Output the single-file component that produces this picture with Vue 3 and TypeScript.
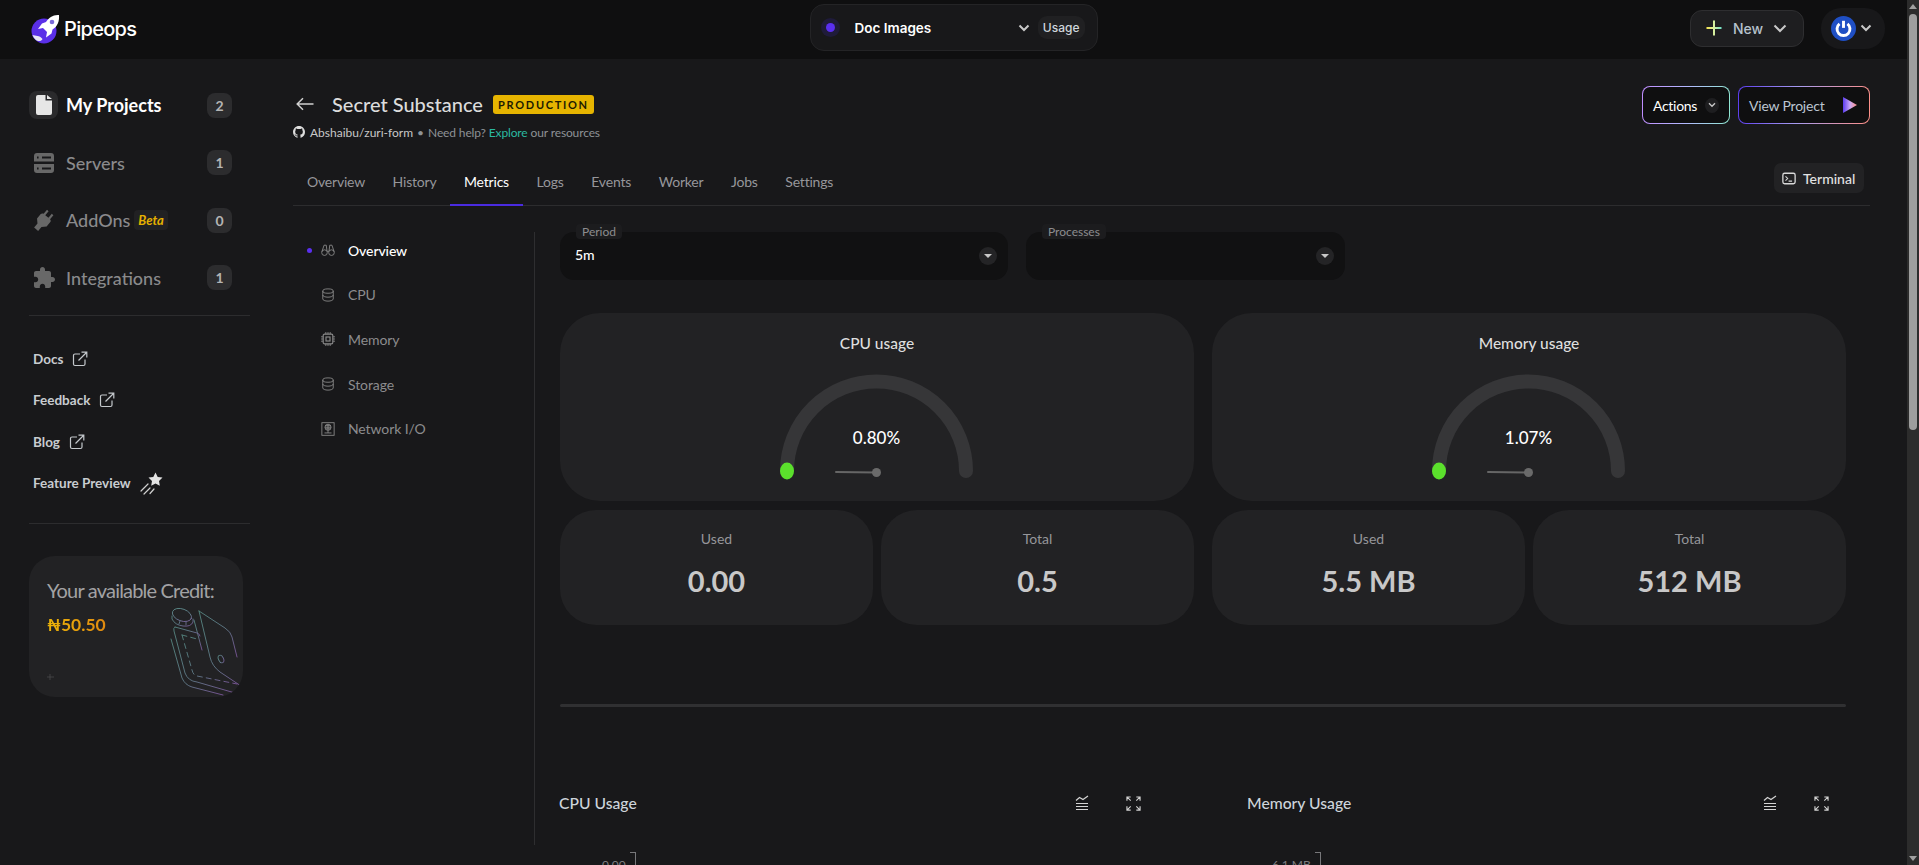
<script setup lang="ts">
interface NavItem { label: string; count: number; icon: string; active?: boolean; beta?: boolean }
const nav: NavItem[] = [
  { label: 'My Projects', count: 2, icon: 'file', active: true },
  { label: 'Servers', count: 1, icon: 'server' },
  { label: 'AddOns', count: 0, icon: 'plug', beta: true },
  { label: 'Integrations', count: 1, icon: 'puzzle' },
]
const links = ['Docs', 'Feedback', 'Blog']
const tabs = ['Overview', 'History', 'Metrics', 'Logs', 'Events', 'Worker', 'Jobs', 'Settings']
const subnav = [
  { label: 'Overview', icon: 'binoculars', active: true },
  { label: 'CPU', icon: 'db' },
  { label: 'Memory', icon: 'chip' },
  { label: 'Storage', icon: 'db' },
  { label: 'Network I/O', icon: 'net' },
]
const gauges = [
  { title: 'CPU usage', value: '0.80%', used: '0.00', total: '0.5' },
  { title: 'Memory usage', value: '1.07%', used: '5.5 MB', total: '512 MB' },
]
const charts = [
  { title: 'CPU Usage', tick: '0.00' },
  { title: 'Memory Usage', tick: '6.1 MB' },
]
</script>

<template>
  <div class="app">
    <div class="page">
      <header class="topbar">
        <div class="brand">
          <svg class="logo" viewBox="0 0 30 30" width="30" height="30">
            <circle cx="13" cy="17" r="12.500" fill="#5a2fe8" />
            <path d="M1.500 21c3 1 7 0 10 4-2 4-8 2-10-4z" fill="#e8e6f5" />
            <path d="M28 1c-6-.5-10 2.500-13 7l-4 1.500-4 5.500 5-1 4 4-1 5.500 5.500-4 1-4c5-3 7-8 6.500-14.500z" fill="#fff" />
            <circle cx="21" cy="8" r="2.300" fill="#7a6ad8" />
          </svg>
          <span class="brand-name">Pipeops</span>
        </div>
        <div class="project-pill">
          <span class="halo"><i></i></span>
          <span class="project-name">Doc Images</span>
          <svg class="chev" viewBox="0 0 12 8" width="12" height="8"><path d="M1.500 1.500 6 6l4.500-4.500" /></svg>
          <span class="usage">Usage</span>
        </div>
        <div class="top-actions">
          <button class="new-btn">
            <svg viewBox="0 0 16 16" width="16" height="16">
              <defs><linearGradient id="plusg" x1="0" x2="1" y1="0" y2="0"><stop offset="0" stop-color="#f4e34e" /><stop offset="0.5" stop-color="#d8efa0" /><stop offset="1" stop-color="#6fe0c8" /></linearGradient></defs>
              <path d="M0.500 7h15v2h-15zM7 .5h2v15H7z" fill="url(#plusg)" />
            </svg>
            <span>New</span>
            <svg class="chev wide" viewBox="0 0 14 9" width="14" height="9"><path d="M1.500 1.500 7 7l5.500-5.500" /></svg>
          </button>
          <div class="avatar-pill">
            <svg viewBox="0 0 24 24" width="25" height="25">
              <circle cx="12" cy="12" r="12" fill="#1f4fc4" />
              <path d="M8.200 7.600a6.200 6.200 0 1 0 7.600 0" fill="none" stroke="#fff" stroke-width="2.800" />
              <path d="M12 4.600v6.800" stroke="#fff" stroke-width="2.800" />
            </svg>
            <svg class="chev" viewBox="0 0 12 8" width="12" height="8"><path d="M1.500 1.500 6 6l4.500-4.500" /></svg>
          </div>
        </div>
      </header>

      <div class="shell">
        <aside class="sidebar">
          <nav class="nav">
            <div v-for="item in nav" :key="item.label" class="nav-row" :class="{ active: item.active }">
              <span class="nav-icon">
                <svg v-if="item.icon === 'file'" viewBox="0 0 16 20" width="16" height="20"><path d="M2 0h7.500v5.500H16V18a2 2 0 0 1-2 2H2a2 2 0 0 1-2-2V2a2 2 0 0 1 2-2z" fill="#e6e6e6" /><path d="M11 0l5 4h-5z" fill="#e6e6e6" /></svg>
                <svg v-else-if="item.icon === 'server'" viewBox="0 0 20 20" width="20" height="20"><path fill-rule="evenodd" d="M3 0h14a3 3 0 0 1 3 3v5.500H0V3a3 3 0 0 1 3-3zm0 3.500v2h1.600v-2zM0 11h20v6a3 3 0 0 1-3 3H3a3 3 0 0 1-3-3zm3 3.500v2h1.600v-2zm5-11v2h9v-2zm0 11v2h9v-2z" fill="#686868" /></svg>
                <svg v-else-if="item.icon === 'plug'" viewBox="0 0 24 24" width="25" height="25"><g transform="rotate(40 12 12)"><path d="M16 7V2h-2v5h-4V2H8v5c-1 0-2 1-2 2v5.500L9.500 18v5h5v-5l3.500-3.500V9c0-1-1-2-2-2z" fill="#686868" /></g></svg>
                <svg v-else viewBox="0 0 24 24" width="24" height="24"><path d="M20.500 11H19V7c0-1.100-.9-2-2-2h-4V3.500C13 2.120 11.880 1 10.500 1S8 2.120 8 3.500V5H4c-1.100 0-1.990.9-1.990 2v3.800H3.500c1.490 0 2.700 1.210 2.700 2.700s-1.210 2.700-2.700 2.700H2V20c0 1.100.9 2 2 2h3.800v-1.500c0-1.490 1.210-2.700 2.700-2.700 1.490 0 2.700 1.210 2.700 2.700V22H17c1.100 0 2-.9 2-2v-4h1.500c1.380 0 2.500-1.120 2.500-2.500S21.880 11 20.500 11z" fill="#686868" /></svg>
              </span>
              <span class="nav-label">{{ item.label }}</span>
              <span v-if="item.beta" class="beta">Beta</span>
              <span class="count">{{ item.count }}</span>
            </div>
          </nav>
          <hr class="rule" />
          <div class="links">
            <a v-for="l in links" :key="l" class="link">
              {{ l }}
              <svg viewBox="0 0 16 16" width="16" height="16" class="ext"><path d="M8 3H3a1.500 1.500 0 0 0-1.500 1.500v8.500A1.500 1.500 0 0 0 3 14.500h8.500A1.500 1.500 0 0 0 13 13V8.500M6.500 9.500 14.500 1.500M9.500 1.200h5.300v5.300" /></svg>
            </a>
            <a class="link preview">
              Feature Preview
              <svg viewBox="0 0 24 24" width="24" height="24">
                <path d="M15.500 1.500l2.200 4.400 4.800.7-3.500 3.300.8 4.800-4.300-2.300-4.300 2.300.8-4.800L8.500 6.600l4.800-.7z" fill="#e3e3e3" />
                <path d="M8 13l-7 7M10 17l-6 6M14 18l-4 4.500" stroke="#d0d0d0" stroke-width="1.200" fill="none" stroke-linecap="round" />
              </svg>
            </a>
          </div>
          <hr class="rule" />
          <div class="credit">
            <p class="credit-title">Your available Credit:</p>
            <p class="credit-value">₦50.50</p>
            <svg class="wallet" viewBox="0 0 214 141" width="214" height="141" fill="none">
              <defs><linearGradient id="wg" x1="0" y1="0" x2="1" y2="1"><stop offset="0" stop-color="#5f9a92" /><stop offset="0.55" stop-color="#6e8a9c" /><stop offset="1" stop-color="#8c5fb0" /></linearGradient></defs>
              <g stroke="url(#wg)" stroke-width="0.900" stroke-linecap="round" stroke-linejoin="round" opacity="0.85">
                <path d="M170 55l26 17q6 4 7 9l5 20" />
                <path d="M170 55l11 46q2 9 10 15l21 14" />
                <path d="M165 64l8 30" />
                <path d="M146 71q-2 1-1 4l11 42q3 8 12 9l38 11" />
                <path d="M146 71l22 6q3 1 3 3" />
                <path d="M142 83l11 39q3 7 10 9l31 8" />
                <path d="M153 79l10 35q1 5 5 6l40 8M153 79l15 4" stroke-dasharray="5 4" />
                <ellipse cx="192" cy="103" rx="2.500" ry="4" transform="rotate(-25 192 103)" />
                <ellipse cx="153" cy="59" rx="10" ry="6" transform="rotate(20 153 59)" />
                <path d="M143 60l0 3q3 6 11 7 8 1 10-4l0-3M150 68l1-3M157 69l0-3" />
              </g>
              <path d="M21 118v6M18 121h7" stroke="#4a4a4c" stroke-width="0.800" />
            </svg>
          </div>
        </aside>

        <main class="main">
          <div class="head">
            <div>
              <div class="title-row">
                <svg viewBox="0 0 18 14" width="18" height="14" class="back"><path d="M17.500 7H1.500M7 1.200 1.200 7 7 12.800" /></svg>
                <h1>Secret Substance</h1>
                <span class="prod">PRODUCTION</span>
              </div>
              <div class="sub-row">
                <svg viewBox="0 0 16 16" width="12" height="12"><path fill="#ddd" d="M8 0C3.580 0 0 3.580 0 8c0 3.540 2.290 6.530 5.470 7.590.4.070.55-.17.55-.38 0-.19-.01-.82-.01-1.490-2.010.37-2.530-.49-2.690-.94-.09-.23-.48-.94-.82-1.130-.28-.15-.68-.52-.01-.53.63-.01 1.080.58 1.230.82.720 1.210 1.870.87 2.330.66.070-.52.280-.87.510-1.070-1.780-.2-3.640-.89-3.640-3.950 0-.87.310-1.590.820-2.150-.08-.2-.36-1.020.080-2.120 0 0 .67-.21 2.200.82.640-.18 1.320-.27 2-.27.68 0 1.360.09 2 .27 1.530-1.040 2.200-.82 2.200-.82.44 1.100.16 1.920.08 2.120.51.56.82 1.270.82 2.150 0 3.070-1.870 3.750-3.650 3.950.29.25.54.73.54 1.480 0 1.070-.01 1.930-.01 2.200 0 .21.150.46.550.38A8.013 8.013 0 0 0 16 8c0-4.420-3.58-8-8-8z" /></svg>
                <span class="repo">Abshaibu/zuri-form</span>
                <span class="bullet">•</span>
                <span class="help">Need help? <b>Explore</b> our resources</span>
              </div>
            </div>
            <div class="head-actions">
              <button class="grad-btn actions">
                Actions
                <span class="mini-chev"><svg class="chev" viewBox="0 0 12 8" width="8" height="6"><path d="M1.500 1.500 6 6l4.500-4.500" /></svg></span>
              </button>
              <button class="grad-btn view">
                View Project
                <svg viewBox="0 0 14 16" width="14" height="16">
                  <defs><linearGradient id="playg" x1="0" x2="1" y1="0" y2="0"><stop offset="0" stop-color="#5b3cf0" /><stop offset="0.5" stop-color="#c9a8f5" /><stop offset="1" stop-color="#ff8f86" /></linearGradient></defs>
                  <path d="M0 0l14 8-14 8z" fill="url(#playg)" />
                </svg>
              </button>
            </div>
          </div>

          <div class="tabs">
            <a v-for="t in tabs" :key="t" class="tab" :class="{ on: t === 'Metrics' }">{{ t }}</a>
            <button class="terminal">
              <svg viewBox="0 0 16 14" width="14" height="13"><rect x="1" y="1" width="14" height="12" rx="2" fill="none" stroke="#d8d8d8" stroke-width="1.500" /><path d="M4 4.500 6.500 7 4 9.500M7.500 10h4" fill="none" stroke="#d8d8d8" stroke-width="1.200" /></svg>
              Terminal
            </button>
          </div>

          <div class="metrics">
            <ul class="subnav">
              <li v-for="s in subnav" :key="s.label" class="sub-item" :class="{ on: s.active }">
                <i class="sub-dot"></i>
                <svg class="sub-icon" viewBox="0 0 16 16" width="14" height="14">
                  <template v-if="s.icon === 'binoculars'">
                    <circle cx="4" cy="11" r="3.200" /><circle cx="12" cy="11" r="3.200" />
                    <path d="M1 10 3.500 2.500h2.500L6.800 9M15 10l-2.500-7.500H10L9.200 9M6.800 9.500h2.400" />
                  </template>
                  <template v-else-if="s.icon === 'db'">
                    <ellipse cx="8" cy="3.500" rx="6" ry="2.500" />
                    <path d="M2 3.500v9c0 1.400 2.700 2.500 6 2.500s6-1.100 6-2.500v-9M2 8c0 1.400 2.700 2.500 6 2.500s6-1.100 6-2.500" />
                  </template>
                  <template v-else-if="s.icon === 'chip'">
                    <rect x="2.500" y="2.500" width="11" height="11" rx="1.500" stroke-width="1.300" />
                    <rect x="5.700" y="5.700" width="4.600" height="4.600" stroke-width="1.300" />
                    <path d="M5.500 0v2.500M8 0v2.500M10.500 0v2.500M5.500 13.500V16M8 13.500V16M10.500 13.500V16M0 5.500h2.500M0 8h2.500M0 10.500h2.500M13.500 5.500H16M13.500 8H16M13.500 10.500H16" />
                  </template>
                  <template v-else>
                    <rect x="1" y="0.800" width="14" height="14.400" />
                    <circle cx="8" cy="6" r="3.500" /><path d="M4.500 6h7M8 2.500v7M5 4.200h6M5 7.800h6M8 9.500v3M4 12.500h8" />
                  </template>
                </svg>
                <span>{{ s.label }}</span>
              </li>
            </ul>

            <section class="panel">
              <div class="selects">
                <div class="select period">
                  <span class="select-label">Period</span>
                  <span class="select-value">5m</span>
                  <span class="caret"><i></i></span>
                </div>
                <div class="select processes">
                  <span class="select-label">Processes</span>
                  <span class="select-value"></span>
                  <span class="caret"><i></i></span>
                </div>
              </div>

              <div class="gauges">
                <div v-for="g in gauges" :key="g.title" class="gauge-col">
                  <div class="gauge-card">
                    <h3>{{ g.title }}</h3>
                    <svg class="gauge" viewBox="0 0 200 115" width="200" height="115">
                      <path d="M11 101A89.500 89.500 0 0 1 190 101" fill="none" stroke="#363638" stroke-width="14" stroke-linecap="round" />
                      <ellipse cx="11" cy="101" rx="7" ry="8.500" fill="#5be02c" />
                      <path d="M60 102 100 102.500" stroke="#666" stroke-width="2" stroke-linecap="round" />
                      <circle cx="100.500" cy="102.500" r="4.500" fill="#6a6a6a" />
                      <text x="100.500" y="74" text-anchor="middle" class="gauge-val">{{ g.value }}</text>
                    </svg>
                  </div>
                  <div class="stats">
                    <div class="stat"><span>Used</span><strong>{{ g.used }}</strong></div>
                    <div class="stat"><span>Total</span><strong>{{ g.total }}</strong></div>
                  </div>
                </div>
              </div>

              <div class="thick-rule"></div>

              <div class="charts">
                <div v-for="c in charts" :key="c.title" class="chart">
                  <div class="chart-head">
                    <h4>{{ c.title }}</h4>
                    <span class="chart-tools">
                      <svg viewBox="0 0 14 16" width="14" height="16" class="tool"><path d="M1 5.500 4.500 2.500 8 4.500 13 1M1 8.500h12M1 11.500h12M1 14.500h12" /></svg>
                      <svg viewBox="0 0 16 16" width="15" height="15" class="tool"><path d="M1 5V1h4M11 1h4v4M15 11v4h-4M5 15H1v-4M1 1l4 4M15 1l-4 4M15 15l-4-4M1 15l4-4" /></svg>
                    </span>
                  </div>
                  <div class="axis"><span>{{ c.tick }}</span><i></i></div>
                </div>
              </div>
            </section>
          </div>
        </main>
      </div>
    </div>
    <div class="scrollbar">
      <i class="arrow up"></i>
      <i class="thumb"></i>
      <i class="arrow down"></i>
    </div>
  </div>
</template>

<style scoped>
.app { display: flex; height: 865px; width: 1919px; overflow: hidden; background: #18181a; font-family: Lato, "Noto Sans", sans-serif; color: #e8e8e8; }
.page { width: 1907px; height: 865px; overflow: hidden; flex: none; }
.scrollbar { width: 12px; height: 865px; background: #2c2c2c; position: relative; display: flex; flex-direction: column; align-items: center; padding: 4px 0; box-sizing: border-box; }
.thumb { display: block; width: 8px; height: 416px; margin-top: 5px; background: #9e9e9e; border-radius: 4px; flex: none; }
.arrow { display: block; width: 0; height: 0; border-left: 4px solid transparent; border-right: 4px solid transparent; flex: none; }
.arrow.up { border-bottom: 5px solid #a0a0a0; }
.arrow.down { border-top: 5px solid #a0a0a0; margin-top: auto; }

.topbar { height: 59px; background: #0f0f10; display: grid; grid-template-columns: 1fr auto 1fr; align-items: center; padding: 0 22px; box-sizing: border-box; }
.brand { display: flex; align-items: center; gap: 3px; padding-left: 9px; margin-bottom: 2px; }
.brand-name { font-family: Inter, sans-serif; font-size: 20px; font-weight: 500; color: #fff; letter-spacing: -0.700px; }
.project-pill { width: 288px; height: 47px; margin-bottom: 4px; box-sizing: border-box; display: flex; align-items: center; padding: 0 12px 0 10px; background: #18181a; border: 1px solid #242426; border-radius: 14px; }
.halo { width: 19px; height: 19px; border-radius: 50%; background: #1f1b3a; display: flex; align-items: center; justify-content: center; }
.halo i { width: 9px; height: 9px; border-radius: 50%; background: #5a2ff0; display: block; }
.project-name { margin-left: 15px; font: 600 13.500px Inter, sans-serif; color: #fff; flex: 1; }
.chev { fill: none; stroke: #c8c8c8; stroke-width: 2; }
.usage { margin-left: 8px; padding: 0 5px; height: 23px; background: #202022; border-radius: 9px; font: 500 12px/23px Inter, sans-serif; color: #cfd6dc; }
.top-actions { justify-self: end; display: flex; align-items: center; gap: 17px; margin-bottom: 3px; }
.new-btn { width: 114px; height: 37px; display: flex; align-items: center; box-sizing: border-box; padding: 0 16px 0 15px; background: #1e1e20; border: 1.500px solid #2e2e30; border-radius: 12px; color: #b6c2cc; font: 500 14px Inter, sans-serif; }
.new-btn span { margin-left: 11px; flex: 1; text-align: left; }
.avatar-pill { width: 64px; height: 41px; background: #18181a; border-radius: 20px; display: flex; align-items: center; gap: 4px; padding-left: 10px; box-sizing: border-box; }

.shell { display: flex; height: 806px; }
.sidebar { width: 293px; flex: none; box-sizing: border-box; padding: 32px 43px 0 29px; }
.nav { display: flex; flex-direction: column; gap: 29.500px; }
.nav-row { height: 28px; display: flex; align-items: center; color: #8a8a8c; font-size: 18px; font-weight: 500; }
.nav-row.active { color: #fff; font-weight: 700; }
.nav-icon { width: 29px; height: 28px; display: flex; align-items: center; justify-content: center; border-radius: 8px; flex: none; margin-right: 8px; }
.active .nav-icon { background: #2a2a2c; }
.nav-label { white-space: nowrap; }
.beta { margin-left: 4px; padding: 0 4px; height: 20px; line-height: 20px; background: #212123; border-radius: 4px; color: #e5b100; font-size: 13px; font-style: italic; font-weight: 700; }
.count { margin-left: auto; margin-right: 18px; width: 25px; height: 25px; line-height: 25px; text-align: center; background: #2c2c2e; border-radius: 8px; font-size: 14px; font-weight: 700; color: #b4b4b4; flex: none; }
.rule { border: 0; border-top: 1px solid #2c2c2e; margin: 23px 0 0; width: 221px; }
.links { display: flex; flex-direction: column; gap: 18.300px; padding: 32px 0 29px 4px; }
.link { height: 23px; display: flex; align-items: center; gap: 9px; font-size: 13.500px; font-weight: 700; color: #c8ccd0; }
.ext { fill: none; stroke: #c4c8cc; stroke-width: 1.200; }
.links + .rule { margin-top: 0; }
.credit { position: relative; width: 214px; height: 141px; margin-top: 32px; background: #222224; border-radius: 26px; overflow: hidden; box-sizing: border-box; padding: 21px 18px; }
.credit-title { margin: 0; font-size: 20px; line-height: 26px; letter-spacing: -0.800px; color: #a2a2a4; white-space: nowrap; }
.credit-value { margin: 11px 0 0; font-size: 17.500px; font-weight: 700; line-height: 22px; width: max-content; background: linear-gradient(90deg, #eab308, #e08a10); -webkit-background-clip: text; background-clip: text; color: transparent; }
.wallet { position: absolute; left: 0; top: 0; }

.main { flex: 1; min-width: 0; box-sizing: border-box; padding: 27px 37px 0 0; }
.head { display: flex; justify-content: space-between; align-items: flex-start; }
.title-row { height: 36px; display: flex; align-items: center; padding-left: 3px; }
.back { fill: none; stroke: #cfcfcf; stroke-width: 1.500; margin-right: 18px; }
h1 { margin: 0; font-size: 20px; font-weight: 500; color: #dcdcdc; white-space: nowrap; }
.prod { margin-left: 10px; width: 101px; height: 19px; line-height: 19px; text-align: center; background: #e6b400; color: #201a00; border-radius: 3px; font-size: 11px; font-weight: 700; letter-spacing: 1.700px; }
.sub-row { display: flex; align-items: center; gap: 5px; margin-top: 1px; height: 18px; font-size: 12px; color: #8e9296; }
.repo { color: #c8c8c8; }
.bullet { margin: 0 -1px; }
.help { letter-spacing: -0.130px; }
.sub-row b { font-weight: 400; color: #2bb9a0; }
.head-actions { display: flex; gap: 8px; }
.grad-btn { height: 38px; box-sizing: border-box; display: flex; align-items: center; border: 1.500px solid transparent; border-radius: 8px; font: 400 14px Lato, sans-serif; }
.actions { width: 88px; padding: 0 10px; gap: 8px; color: #fff; letter-spacing: -0.300px; background: linear-gradient(#0f0f10, #0f0f10) padding-box, linear-gradient(95deg, #c08cff, #b3b8ff 50%, #8fe8d2) border-box; }
.view { width: 132px; padding: 0 12px 0 10px; justify-content: space-between; color: #bcc6d2; letter-spacing: -0.200px; background: linear-gradient(#0f0f10, #0f0f10) padding-box, linear-gradient(95deg, #5b3cf0, #a79cf0 45%, #ff8f86) border-box; }
.mini-chev { width: 15px; height: 15px; border-radius: 50%; background: #1e1e20; display: flex; align-items: center; justify-content: center; }

.tabs { margin-top: 18px; height: 46px; display: flex; align-items: center; border-bottom: 1px solid #2c2c2e; position: relative; }
.tab { height: 46px; box-sizing: border-box; line-height: 44px; padding: 0 13.600px 0 14px; font-size: 14px; letter-spacing: -0.200px; color: #96969a; border-bottom: 2px solid transparent; margin-bottom: -1px; }
.tab.on { color: #fff; border-bottom-color: #4a2be0; }
.terminal { margin-left: auto; margin-right: 6px; margin-top: -8px; width: 90px; height: 30px; box-sizing: border-box; display: flex; align-items: center; gap: 7px; padding: 0 8px; background: #222224; border: 0; border-radius: 7px; color: #e2e2e2; font: 500 14px Lato, sans-serif; }

.metrics { display: flex; }
.subnav { list-style: none; margin: 26px 0 0; padding: 0 0 0 14px; width: 242px; height: 613px; box-sizing: border-box; border-right: 1px solid #2e2e30; display: flex; flex-direction: column; gap: 24.700px; }
.sub-item { height: 20px; position: relative; top: 8px; display: flex; align-items: center; color: #8c8c8e; font-size: 14px; letter-spacing: -0.100px; }
.sub-item.on { color: #fff; font-weight: 500; }
.sub-dot { width: 5px; height: 5px; border-radius: 50%; flex: none; margin-right: 9px; }
.on .sub-dot { background: #5a2ff0; }
.sub-icon { fill: none; stroke: #8a8a8a; stroke-width: 1; margin-right: 13px; flex: none; }
.panel { flex: 1; min-width: 0; padding: 26px 24px 0 25px; }
.selects { display: flex; gap: 18px; }
.select { position: relative; height: 48px; background: #111112; border-radius: 14px; display: flex; align-items: center; padding: 0 11px 0 15px; box-sizing: border-box; }
.period { width: 448px; }
.processes { width: 319px; }
.select-label { position: absolute; left: 16px; top: -8px; padding: 0 6px; background: #1c1c1e; border-radius: 4px; font-size: 12px; line-height: 15px; color: #8c8c8e; }
.select-value { flex: 1; padding-bottom: 2px; font-size: 14px; line-height: 18px; font-weight: 500; color: #fff; }
.caret { width: 18px; height: 18px; border-radius: 50%; background: #242426; display: flex; align-items: center; justify-content: center; }
.caret i { width: 0; height: 0; border-left: 4px solid transparent; border-right: 4px solid transparent; border-top: 4px solid #c8c8c8; display: block; }
.gauges { display: grid; grid-template-columns: 634px 634px; gap: 18px; margin-top: 33px; }
.gauge-col { display: flex; flex-direction: column; gap: 9px; }
.gauge-card { height: 188px; background: #222224; border-radius: 40px; box-sizing: border-box; padding-top: 20px; display: flex; flex-direction: column; align-items: center; }
h3 { margin: 0; height: 20px; line-height: 20px; font-size: 15.500px; font-weight: 500; color: #dedede; }
.gauge { margin: 17px 2px 0 0; overflow: visible; }
.gauge-val { font-family: Lato, sans-serif; font-size: 17px; fill: #fff; font-weight: 500; }
.stats { display: grid; grid-template-columns: 1fr 1fr; gap: 8px; }
.stat { height: 115px; background: #222224; border-radius: 36px; display: flex; flex-direction: column; align-items: center; padding-top: 19px; box-sizing: border-box; }
.stat span { font-size: 14px; line-height: 20px; color: #96969a; }
.stat strong { margin-top: 13px; font-size: 29px; line-height: 38px; font-weight: 700; color: #c8c8c8; }
.thick-rule { height: 3px; background: #303032; margin-top: 79px; border-radius: 2px; }
.charts { display: grid; grid-template-columns: 590px 590px; gap: 98px; margin: 83px 0 0 -1px; }
.chart-head { height: 26px; display: flex; align-items: center; justify-content: space-between; padding-right: 8px; }
h4 { margin: 0; font-size: 15.700px; font-weight: 500; color: #cdd4da; }
.chart-tools { display: flex; gap: 37px; align-items: center; }
.tool { fill: none; stroke: #d4d4d4; stroke-width: 1.200; }
.axis { margin-top: 36px; display: flex; align-items: flex-start; height: 20px; padding-left: 43px; }
.chart + .chart .axis { padding-left: 25px; }
.axis span { font-size: 12px; line-height: 16px; color: #7e7e80; margin-top: 5px; }
.axis i { display: block; width: 5px; height: 20px; border-top: 1px solid #77777a; border-right: 1px solid #77777a; margin-left: 4px; }
</style>

<style>
html, body { margin: 0; background: #18181a; overflow: hidden; }
</style>
